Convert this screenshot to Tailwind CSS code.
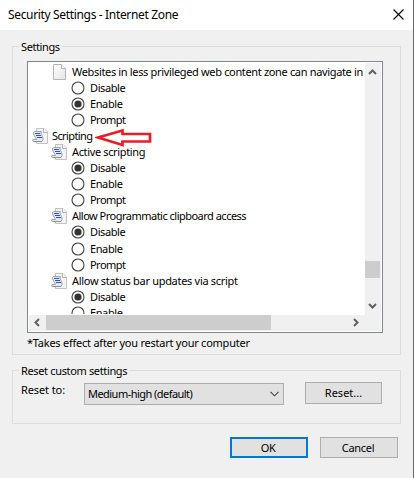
<!DOCTYPE html>
<html lang="en">
<head>
<meta charset="utf-8">
<title>Security Settings - Internet Zone</title>
<script src="https://cdn.jsdelivr.net/npm/@tailwindcss/browser@4"></script>
</head>
<body class="w-[414px] h-[478px] overflow-hidden bg-[#f0f0f0] font-['Noto_Sans',sans-serif] text-[11px] leading-4 text-black whitespace-nowrap">
<svg class="hidden">
  <symbol id="off" viewBox="0 0 14 14"><circle cx="7" cy="7" r="6" fill="#fff" stroke="#444" stroke-width="1.1"/></symbol>
  <symbol id="on" viewBox="0 0 14 14"><circle cx="7" cy="7" r="6" fill="#fff" stroke="#444" stroke-width="1.1"/><circle cx="7" cy="7" r="3.6" fill="#333"/></symbol>
  <symbol id="script" viewBox="0 0 16 16">
    <path d="M4.500.5h7.500l3.500 3.500v11.500h-11z" fill="#f4f4f4" stroke="#c2c2c2"/>
    <path d="M11.500.5v4h4" fill="#fff" stroke="#b0b0b0"/>
    <path d="M2.500 3.500H9.500q-1 1.500 0 3l1 2q1.500 3-.5 5H2q-1.500 0-1.500-1.200T2 11.500h2.500L2 7Q.2 4.500 2.500 3.500z" fill="#e6e9f0" stroke="#a2a4a8"/>
    <path d="M1.500 13.500H10" stroke="#8f8f8f"/>
    <path d="M3 5h5v1H3zM4 7h5v1H4zM5 9h5v1H5z" fill="#2f50c8"/>
  </symbol>
</svg>
<div class="flex w-full h-full">
<main class="w-[413px] h-full flex flex-col">
  <header class="h-[30px] bg-white flex items-center justify-between pl-2 pr-[9px]">
    <h1 class="text-[12px] tracking-[-0.34px]">Security Settings - Internet Zone</h1>
    <svg class="w-[11px] h-[11px] -mt-[2px]" viewBox="0 0 11 11"><path d="M.5.5l10 10M10.500.5l-10 10" stroke="#000" stroke-width="1.100"/></svg>
  </header>

  <section class="ml-3 mt-4 w-[389px] h-[309px] border border-[#dcdcdc] flex flex-col items-start pl-[6px]">
    <h2 class="-mt-[8px] h-4 px-[2px] bg-[#f0f0f0] tracking-[-0.4px]">Settings</h2>
    <div class="mt-[6px] ml-2 w-[356px] h-[272px] border border-[#828790] bg-white p-px flex flex-col">
      <div class="flex h-[252px]">
        <div class="w-[336px] h-[251px] overflow-hidden pt-px">
          <div class="flex h-4 items-center pl-6"><svg class="w-[13px] h-4 mr-[6px] shrink-0" viewBox="0 0 13 16"><defs><linearGradient id="g" x2="1" y2="1"><stop stop-color="#fff"/><stop offset="1" stop-color="#e4e4e4"/></linearGradient></defs><path d="M.5.5h8l4 4v11H.5z" fill="url(#g)" stroke="#b5b5b5"/><path d="M8.500.5v4h4" fill="#fff" stroke="#b5b5b5"/></svg><span class="tracking-[-0.34px]">Websites in less privileged web content zone can navigate in</span></div>
          <div class="flex h-4 items-center pl-[42px] gap-[5px] tracking-[-0.4px]"><svg class="size-[14px]"><use href="#off"/></svg><span>Disable</span></div>
          <div class="flex h-4 items-center pl-[42px] gap-[5px] tracking-[-0.4px]"><svg class="size-[14px]"><use href="#on"/></svg><span>Enable</span></div>
          <div class="flex h-4 items-center pl-[42px] gap-[5px] tracking-[-0.55px]"><svg class="size-[14px]"><use href="#off"/></svg><span>Prompt</span></div>
          <div class="flex h-4 items-center pl-[3px]"><svg class="size-4 mr-1"><use href="#script"/></svg><span class="tracking-[-0.6px]">Scripting</span></div>
          <div class="flex h-4 items-center pl-[22px]"><svg class="size-4 mr-[5px]"><use href="#script"/></svg><span class="tracking-[-0.36px]">Active scripting</span></div>
          <div class="flex h-4 items-center pl-[42px] gap-[5px] tracking-[-0.4px]"><svg class="size-[14px]"><use href="#on"/></svg><span>Disable</span></div>
          <div class="flex h-4 items-center pl-[42px] gap-[5px] tracking-[-0.4px]"><svg class="size-[14px]"><use href="#off"/></svg><span>Enable</span></div>
          <div class="flex h-4 items-center pl-[42px] gap-[5px] tracking-[-0.55px]"><svg class="size-[14px]"><use href="#off"/></svg><span>Prompt</span></div>
          <div class="flex h-4 items-center pl-[22px]"><svg class="size-4 mr-[5px]"><use href="#script"/></svg><span class="tracking-[-0.51px]">Allow Programmatic clipboard access</span></div>
          <div class="flex h-4 items-center pl-[42px] gap-[5px] tracking-[-0.4px]"><svg class="size-[14px]"><use href="#on"/></svg><span>Disable</span></div>
          <div class="flex h-4 items-center pl-[42px] gap-[5px] mt-px tracking-[-0.4px]"><svg class="size-[14px]"><use href="#off"/></svg><span>Enable</span></div>
          <div class="flex h-4 items-center pl-[42px] gap-[5px] tracking-[-0.55px]"><svg class="size-[14px]"><use href="#off"/></svg><span>Prompt</span></div>
          <div class="flex h-4 items-center pl-[22px]"><svg class="size-4 mr-[5px]"><use href="#script"/></svg><span class="tracking-[-0.3px]">Allow status bar updates via script</span></div>
          <div class="flex h-4 items-center pl-[42px] gap-[5px] tracking-[-0.4px]"><svg class="size-[14px]"><use href="#on"/></svg><span>Disable</span></div>
          <div class="flex h-4 items-center pl-[42px] gap-[5px] tracking-[-0.4px]"><svg class="size-[14px]"><use href="#off"/></svg><span>Enable</span></div>
        </div>
        <div class="w-4 bg-[#f0f0f0] flex flex-col items-start">
          <svg class="w-[15px] h-[17px]" viewBox="0 0 15 17"><path d="M4 11l3.500-3.500L11 11" fill="none" stroke="#606060" stroke-width="2"/></svg>
          <div class="mt-[181px] w-[15px] h-[17px] bg-[#cdcdcd]"></div>
          <svg class="mt-[20px] w-[15px] h-[17px]" viewBox="0 0 15 17"><path d="M4 6l3.500 3.500L11 6" fill="none" stroke="#606060" stroke-width="2"/></svg>
        </div>
      </div>
      <div class="h-4 bg-[#f0f0f0] flex">
        <svg class="w-[17px] h-[15px]" viewBox="0 0 17 15"><path d="M10 4L6.500 7.500 10 11" fill="none" stroke="#606060" stroke-width="2"/></svg>
        <div class="w-[225px] h-[15px] bg-[#cdcdcd]"></div>
        <svg class="ml-[76px] w-[17px] h-[15px]" viewBox="0 0 17 15"><path d="M7 4l3.500 3.500L7 11" fill="none" stroke="#606060" stroke-width="2"/></svg>
      </div>
    </div>
    <p class="ml-2 mt-[2px] tracking-[-0.24px]">*Takes effect after you restart your computer</p>
  </section>

  <section class="ml-3 mt-[15px] w-[389px] h-[54px] border border-[#dcdcdc] pl-[6px]">
    <h2 class="-mt-[8px] h-4 px-[2px] bg-[#f0f0f0] w-fit tracking-[-0.35px]">Reset custom settings</h2>
    <div class="flex pl-[2px] mt-[3px]">
      <label class="w-[63px] tracking-[-0.1px]">Reset to:</label>
      <div class="mt-px w-[200px] h-[22px] border border-[#adadad] bg-[#e1e1e1] flex items-center justify-between pl-[3px] pr-1"><span class="tracking-[-0.54px]">Medium-high (default)</span><svg class="w-[9px] h-[6px]" viewBox="0 0 9 6"><path d="M.5.800l4 4 4-4" fill="none" stroke="#444" stroke-width="1.100"/></svg></div>
      <button class="ml-[21px] w-[77px] h-[22px] border border-[#adadad] bg-[#e1e1e1]"><span>Reset...</span></button>
    </div>
  </section>

  <footer class="flex mt-[13px] ml-[230px] gap-3">
    <button class="w-[78px] h-[21px] border-2 border-[#0078d7] bg-[#e1e1e1] leading-4 pr-[2px] tracking-[-0.4px]"><span>OK</span></button>
    <button class="w-[78px] h-[21px] border border-[#adadad] bg-[#e1e1e1] leading-4 pr-[2px] tracking-[-0.3px]"><span>Cancel</span></button>
  </footer>
</main>
<div class="w-px h-full bg-[#6a6a6a]"></div>
</div>
<svg class="absolute left-[95px] top-[128px] w-[57px] h-[19px]" viewBox="0 0 57 19"><path d="M3 9.500L27.500 2.500V6H55v7.500H27.500v3.500z" fill="#fff" stroke="#e81e25" stroke-width="2.700"/></svg>
</body>
</html>
